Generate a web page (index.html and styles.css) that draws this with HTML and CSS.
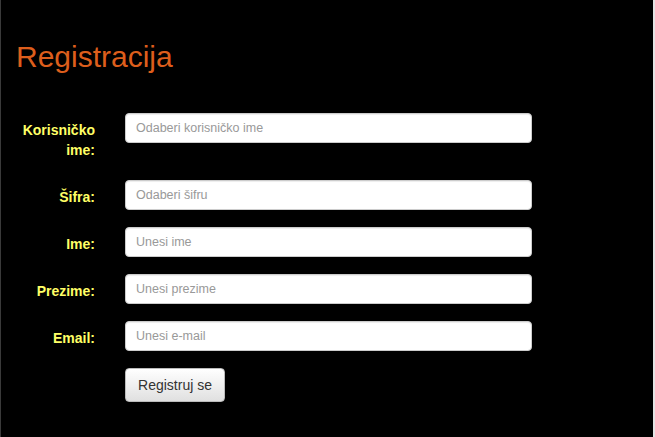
FILE: index.html
```html
<!DOCTYPE html>
<html lang="sr">
<head>
<meta charset="utf-8">
<title>Registracija</title>
<link rel="stylesheet" href="styles.css">
</head>
<body>
<div class="page">
  <h2 class="title">Registracija</h2>
  <form class="form">
    <label class="lbl" for="u">Korisničko ime:</label>
    <input class="field" id="u" type="text" placeholder="Odaberi korisničko ime">
    <label class="lbl" for="p">Šifra:</label>
    <input class="field" id="p" type="password" placeholder="Odaberi šifru">
    <label class="lbl" for="i">Ime:</label>
    <input class="field" id="i" type="text" placeholder="Unesi ime">
    <label class="lbl" for="s">Prezime:</label>
    <input class="field" id="s" type="text" placeholder="Unesi prezime">
    <label class="lbl" for="e">Email:</label>
    <input class="field" id="e" type="email" placeholder="Unesi e-mail">
    <span></span>
    <div><button class="btn" type="button">Registruj se</button></div>
  </form>
</div>
</body>
</html>
```
FILE: styles.css
```css
html, body {
  margin: 0;
  padding: 0;
  background: #000;
}
body {
  font-family: "Liberation Sans", Arial, sans-serif;
  min-height: 437px;
  box-sizing: border-box;
  border-left: 1px solid #3a3a3a;
  border-right: 2px solid #e4e4e4;
}
.page {
  padding: 40px 14px 0 15px;
}
.title {
  margin: 0;
  font-size: 30px;
  line-height: 33px;
  font-weight: normal;
  color: #dd5e1c;
}
.form {
  margin-top: 40px;
  display: grid;
  grid-template-columns: 79px 407px;
  column-gap: 30px;
  row-gap: 17px;
  align-items: start;
}
.lbl {
  font-size: 14px;
  font-weight: bold;
  line-height: 20px;
  color: #ffff66;
  text-align: right;
  padding: 7px 0 3px 0;
}
.field {
  box-sizing: border-box;
  width: 407px;
  height: 30px;
  margin: 0;
  padding: 0 10px;
  font-family: "Liberation Sans", Arial, sans-serif;
  font-size: 12.5px;
  color: #555;
  background: #fff;
  border: 1px solid #ccc;
  border-radius: 4px;
  box-shadow: inset 0 1px 1px rgba(0,0,0,0.075);
  outline: none;
}
.field::placeholder {
  color: #999;
}
.btn {
  box-sizing: border-box;
  width: 100px;
  height: 34px;
  padding: 6px 12px;
  font-family: "Liberation Sans", Arial, sans-serif;
  font-size: 14px;
  line-height: 20px;
  color: #333;
  background: linear-gradient(to bottom, #ffffff 0%, #e0e0e0 100%);
  border: 1px solid #bbb;
  border-radius: 4px;
}
```
